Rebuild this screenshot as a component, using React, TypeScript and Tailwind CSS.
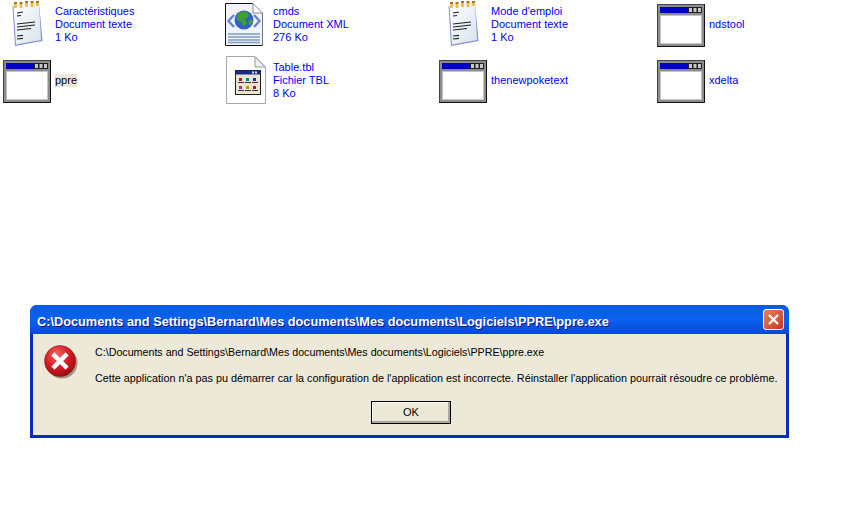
const FONT = "font-['Liberation_Sans',sans-serif]"

function NotepadIcon() {
  return (
    <svg width="48" height="48" viewBox="0 0 48 48">
      <defs>
        <linearGradient id="note" x1="0" y1="0" x2="1" y2="1">
          <stop offset="0" stopColor="#ffffff" />
          <stop offset="1" stopColor="#d6e4ec" />
        </linearGradient>
      </defs>
      <path d="M9.500 6 L36 3 L39.500 41 L12 46 Z" fill="#8890d0" />
      <path d="M10.500 6 L36 3 L38 40 L13 44.500 Z" fill="url(#note)" />
      <g stroke="#e8b93a" strokeWidth="2.500">
        <path d="M12.500 3v5M18 3v5M23.500 2v5M29 2v5M34.500 2v4" />
      </g>
      <g fill="#a9781c">
        <rect x="11" y="2" width="3" height="2" />
        <rect x="16.500" y="2" width="3" height="2" />
        <rect x="22" y="1" width="3" height="2" />
        <rect x="27.500" y="1" width="3" height="2" />
        <rect x="33" y="1" width="3" height="2" />
      </g>
      <g stroke="#222" strokeWidth="1.200">
        <path d="M14 13l6-1M14 16l4-.5M14 24l18-2M14 27l18-2M14 30l14-1.500M14 36l6-.7M14 39l6-.7" />
      </g>
    </svg>
  )
}

function XmlIcon() {
  return (
    <svg width="48" height="48" viewBox="0 0 48 48">
      <path d="M4.500 3.500H32L41.500 13V45.500H4.500Z" fill="#f0f4fa" />
      <path d="M4.500 45.500V3.500H32M4.500 45.500H41.500" fill="none" stroke="#111" />
      <path d="M41.500 13V45" fill="none" stroke="#777" />
      <path d="M32 3.500V13H41.500Z" fill="#fff" stroke="#8a8a8a" />
      <path d="M13 15L7.500 21L13 27" fill="none" stroke="#6b82d8" strokeWidth="2.500" />
      <path d="M33 15L38.500 21L33 27" fill="none" stroke="#6b82d8" strokeWidth="2.500" />
      <circle cx="23" cy="20" r="9.500" fill="#2f62c8" />
      <path d="M16 15c3-4 8-4 10-3l2 4-4 3 2 4-3 4-3-5-4-2z" fill="#3ea032" />
      <path d="M27 21l4-2 1 3-3 4z" fill="#3ea032" />
      <g stroke="#7d9ac4" strokeWidth="1.300">
        <path d="M7 34H39M7 37H39M7 40H39M7 42.500H39" />
      </g>
    </svg>
  )
}

function TblIcon() {
  return (
    <svg width="48" height="48" viewBox="0 0 48 48">
      <path d="M5.500 0.500H34L44.500 11V47.500H5.500Z" fill="#fff" stroke="#a8a8a8" />
      <path d="M34 1V11H44Z" fill="#f0f0f0" stroke="#9a9a9a" />
      <rect x="14.500" y="14.500" width="25" height="24" fill="#e8e4d0" stroke="#222" />
      <rect x="14.500" y="14.500" width="25" height="4" fill="#1a2a8a" />
      <rect x="31" y="15.500" width="2" height="2" fill="#ddd" />
      <rect x="34" y="15.500" width="2" height="2" fill="#ddd" />
      <g>
        <rect x="18" y="22" width="3" height="3" fill="#c01030" />
        <rect x="25" y="22" width="3" height="3" fill="#088a9a" />
        <rect x="32" y="22" width="3" height="3" fill="#1030b0" />
        <rect x="18" y="30" width="3" height="3" fill="#c020c0" />
        <rect x="25" y="30" width="3" height="3" fill="#b0a000" />
        <rect x="32" y="30" width="3" height="3" fill="#c01030" />
      </g>
      <path d="M17 26.500h6M24 26.500h6M31 26.500h6M17 34.500h6M24 34.500h6M31 34.500h6" stroke="#333" />
    </svg>
  )
}

function WindowIcon() {
  return (
    <svg width="48" height="43" viewBox="0 0 48 43">
      <rect width="48" height="43" fill="#8c8c8c" />
      <path d="M0.500 42.500V0.500H47.500" fill="none" stroke="#444" />
      <path d="M47.500 0V42.500H0" fill="none" stroke="#111" />
      <rect x="3" y="3" width="42" height="6" fill="#0000c4" />
      <rect x="31" y="3" width="14" height="6" fill="#222" />
      <rect x="32" y="4" width="3" height="4" fill="#c8c8c8" />
      <rect x="36.500" y="4" width="3" height="4" fill="#c8c8c8" />
      <rect x="41" y="4" width="3" height="4" fill="#c8c8c8" />
      <rect x="3.500" y="11.500" width="41" height="28" fill="#fff" stroke="#c4c4c4" />
    </svg>
  )
}

function ErrorIcon() {
  return (
    <svg width="34" height="34" viewBox="0 0 34 34" className="shrink-0">
      <defs>
        <radialGradient id="err" cx="0.400" cy="0.300" r="0.800">
          <stop offset="0" stopColor="#f06a6a" />
          <stop offset="0.500" stopColor="#d81a22" />
          <stop offset="1" stopColor="#8c0a10" />
        </radialGradient>
      </defs>
      <circle cx="18" cy="18" r="15.500" fill="#9a9684" />
      <circle cx="16" cy="16" r="15.500" fill="url(#err)" stroke="#8a0a0e" strokeWidth="0.500" />
      <path d="M10.500 10.500L21.500 21.500M21.500 10.500L10.500 21.500" stroke="#fff" strokeWidth="4.500" strokeLinecap="square" />
    </svg>
  )
}

function FileItem({ icon, lines, plain, low }: { icon: React.ReactNode; lines: string[]; plain?: boolean; low?: boolean }) {
  return (
    <div className="flex items-center pl-[3px] h-12">
      <div className={`w-12 flex justify-center shrink-0 ${low ? 'pt-[3px]' : ''}`}>{icon}</div>
      <div className={`ml-1 text-[11px] leading-[13px] ${plain ? 'text-black bg-[#ece9d8]' : 'text-[#0000ff]'}`}>
        {lines.map((l) => (
          <div key={l}>{l}</div>
        ))}
      </div>
    </div>
  )
}

export default function App() {
  return (
    <div className={`w-[856px] h-[505px] bg-white overflow-hidden ${FONT}`}>
      <div className="grid grid-cols-[218px_218px_218px_202px] gap-y-[8px] h-[305px] content-start">
        <FileItem icon={<NotepadIcon />} lines={['Caractéristiques', 'Document texte', '1 Ko']} />
        <FileItem icon={<XmlIcon />} lines={['cmds', 'Document XML', '276 Ko']} />
        <FileItem icon={<NotepadIcon />} lines={["Mode d'emploi", 'Document texte', '1 Ko']} />
        <FileItem icon={<WindowIcon />} lines={['ndstool']} low />
        <FileItem icon={<WindowIcon />} lines={['ppre']} plain low />
        <FileItem icon={<TblIcon />} lines={['Table.tbl', 'Fichier TBL', '8 Ko']} />
        <FileItem icon={<WindowIcon />} lines={['thenewpoketext']} low />
        <FileItem icon={<WindowIcon />} lines={['xdelta']} low />
      </div>

      <div className="ml-[30px] w-[759px] h-[133px] rounded-t-[7px] bg-[#0a2bbd] flex flex-col overflow-hidden">
        <div className="h-[29px] shrink-0 flex items-center justify-between pl-[7px] pr-[5px] bg-gradient-to-b from-[#0a5be0] via-[#0a62f0] to-[#0848d0]">
          <span className="text-white font-bold text-[12.75px] pt-[4px] [text-shadow:1px_1px_#0f1089]">
            C:\Documents and Settings\Bernard\Mes documents\Mes documents\Logiciels\PPRE\ppre.exe
          </span>
          <div className="w-[21px] h-[21px] rounded-[3px] border border-white bg-gradient-to-br from-[#e8805c] to-[#c23a18] flex items-center justify-center">
            <svg width="13" height="13" viewBox="0 0 13 13">
              <path d="M2 2L11 11M11 2L2 11" stroke="#fff" strokeWidth="2.200" />
            </svg>
          </div>
        </div>
        <div className="flex-1 mx-[3px] mb-[3px] bg-[#ece9d8] flex flex-col">
          <div className="flex pl-[11px] pt-[11px]">
            <ErrorIcon />
            <div className="ml-[17px] text-[10.7px] leading-[13px] text-black pt-[1px]">
              <div>C:\Documents and Settings\Bernard\Mes documents\Mes documents\Logiciels\PPRE\ppre.exe</div>
              <div className="mt-[13px] whitespace-nowrap text-[10.8px]">
                Cette application n'a pas pu démarrer car la configuration de l'application est incorrecte. Réinstaller l'application pourrait résoudre ce problème.
              </div>
            </div>
          </div>
          <div className="flex justify-center mt-[16px] pl-[3px]">
            <button className="w-[80px] h-[23px] bg-[#ece9d8] border border-black text-[11px] text-black shadow-[inset_-2px_-2px_#aca899,inset_1px_1px_#fff]">
              OK
            </button>
          </div>
        </div>
      </div>
    </div>
  )
}
